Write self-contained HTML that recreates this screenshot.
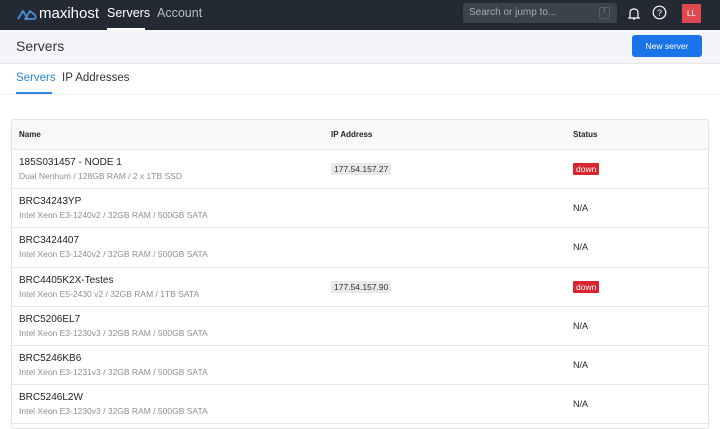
<!DOCTYPE html>
<html><head><style>
*{box-sizing:border-box;margin:0;padding:0}
body{width:720px;height:422px;overflow:hidden;font-family:"Liberation Sans",sans-serif;background:#fff;position:relative;color:#222}
.nav{position:absolute;left:0;top:0;width:720px;height:30px;background:#232a33}
.nav .t{position:absolute;top:6px;font-size:12.5px;color:#fff}
.hdr{position:absolute;top:30px;left:0;width:720px;height:34px;background:#f3f5f8;border-bottom:1px solid #e6e8eb}
.card{position:absolute;left:11px;top:119px;width:698px;height:310px;border:1px solid #e1e4e8;border-radius:3px}
.th{height:30px;background:#f7f8fa;border-bottom:1px solid #e6e8eb;position:relative;font-size:8px;font-weight:bold}
.th span,.r span{position:absolute}
.r{height:39.2px;border-bottom:1px solid #e6e8eb;position:relative}
.n{left:7px;top:7px;font-size:10px;color:#222}
.d{left:7px;top:21px;font-size:8.5px;color:#8a8f96}
.ip{left:319px;top:13px;font-size:8.5px;background:#e8e9eb;padding:1px 3px;color:#333}
.st{left:561px;top:14px;font-size:9px}
.dn{left:561px;top:13px;font-size:8.5px;background:#d9262e;color:#fff;padding:1px 3px;border-radius:1px}
</style></head><body>
<div class="nav">
<svg style="position:absolute;left:16px;top:9px" width="23" height="12" viewBox="0 0 23 12"><path d="M2 10 L7 2 L12 10 M9 10 L14 2 L19 6 Q21 10 17 10 Z" fill="none" stroke="#4a8fd8" stroke-width="1.8" stroke-linejoin="round"/></svg>
<span class="t" style="left:39px;font-size:15px;top:5px;color:#fff">maxihost</span>
<span class="t" style="left:107px">Servers</span>
<div style="position:absolute;left:107px;top:28px;width:38px;height:2px;background:#fff"></div>
<span class="t" style="left:157px;color:#b8bec6">Account</span>
<div style="position:absolute;left:463px;top:3px;width:154px;height:20px;background:#3a424c;border-radius:2px"><span style="position:absolute;left:6px;top:4px;font-size:10px;color:#a6adb6">Search or jump to...</span><span style="position:absolute;left:136px;top:4px;width:11px;height:12px;border:1px solid #555d66;border-radius:2px;font-size:7px;color:#999;text-align:center">/</span></div>
<svg style="position:absolute;left:627px;top:7px" width="14" height="14" viewBox="0 0 14 14"><path d="M3 10 L3 6 Q3 2 7 2 Q11 2 11 6 L11 10 L12 11 L2 11 Z M6 12 L8 12" fill="none" stroke="#fff" stroke-width="1.2"/></svg>
<svg style="position:absolute;left:652px;top:5px" width="15" height="15" viewBox="0 0 15 15"><circle cx="7.5" cy="7.5" r="6.3" fill="none" stroke="#fff" stroke-width="1.2"/><text x="7.5" y="11" font-size="9" text-anchor="middle" fill="#fff" font-family="Liberation Sans">?</text></svg>
<div style="position:absolute;left:682px;top:4px;width:19px;height:19px;background:#e0484f;color:#fff;font-size:8px;text-align:center;line-height:19px">LL</div>
</div>
<div class="hdr"><span style="position:absolute;left:16px;top:8px;font-size:14px;color:#333">Servers</span>
<div style="position:absolute;left:632px;top:5px;width:70px;height:22px;background:#1a73e8;border-radius:3px;color:#fff;font-size:8.5px;text-align:center;line-height:22px">New server</div></div>
<span style="position:absolute;left:16px;top:72px;font-size:11.5px;color:#2b87e0">Servers</span>
<div style="position:absolute;left:16px;top:92px;width:36px;height:2px;background:#2b87e0"></div>
<span style="position:absolute;left:62px;top:72px;font-size:11.5px;color:#333">IP Addresses</span>
<div style="position:absolute;left:0;top:94px;width:720px;height:1px;background:#eceef0"></div>
<div class="card">
<div class="th"><span style="left:7px;top:10px">Name</span><span style="left:319px;top:10px">IP Address</span><span style="left:561px;top:10px">Status</span></div>
<div class="r"><span class="n">185S031457 - NODE 1</span><span class="d">Dual Nenhum / 128GB RAM / 2 x 1TB SSD</span><span class="ip">177.54.157.27</span><span class="dn">down</span></div>
<div class="r"><span class="n">BRC34243YP</span><span class="d">Intel Xeon E3-1240v2 / 32GB RAM / 500GB SATA</span><span class="st">N/A</span></div>
<div class="r"><span class="n">BRC3424407</span><span class="d">Intel Xeon E3-1240v2 / 32GB RAM / 500GB SATA</span><span class="st">N/A</span></div>
<div class="r"><span class="n">BRC4405K2X-Testes</span><span class="d">Intel Xeon E5-2430 v2 / 32GB RAM / 1TB SATA</span><span class="ip">177.54.157.90</span><span class="dn">down</span></div>
<div class="r"><span class="n">BRC5206EL7</span><span class="d">Intel Xeon E3-1230v3 / 32GB RAM / 500GB SATA</span><span class="st">N/A</span></div>
<div class="r"><span class="n">BRC5246KB6</span><span class="d">Intel Xeon E3-1231v3 / 32GB RAM / 500GB SATA</span><span class="st">N/A</span></div>
<div class="r"><span class="n">BRC5246L2W</span><span class="d">Intel Xeon E3-1230v3 / 32GB RAM / 500GB SATA</span><span class="st">N/A</span></div>
</div>
</body></html>
